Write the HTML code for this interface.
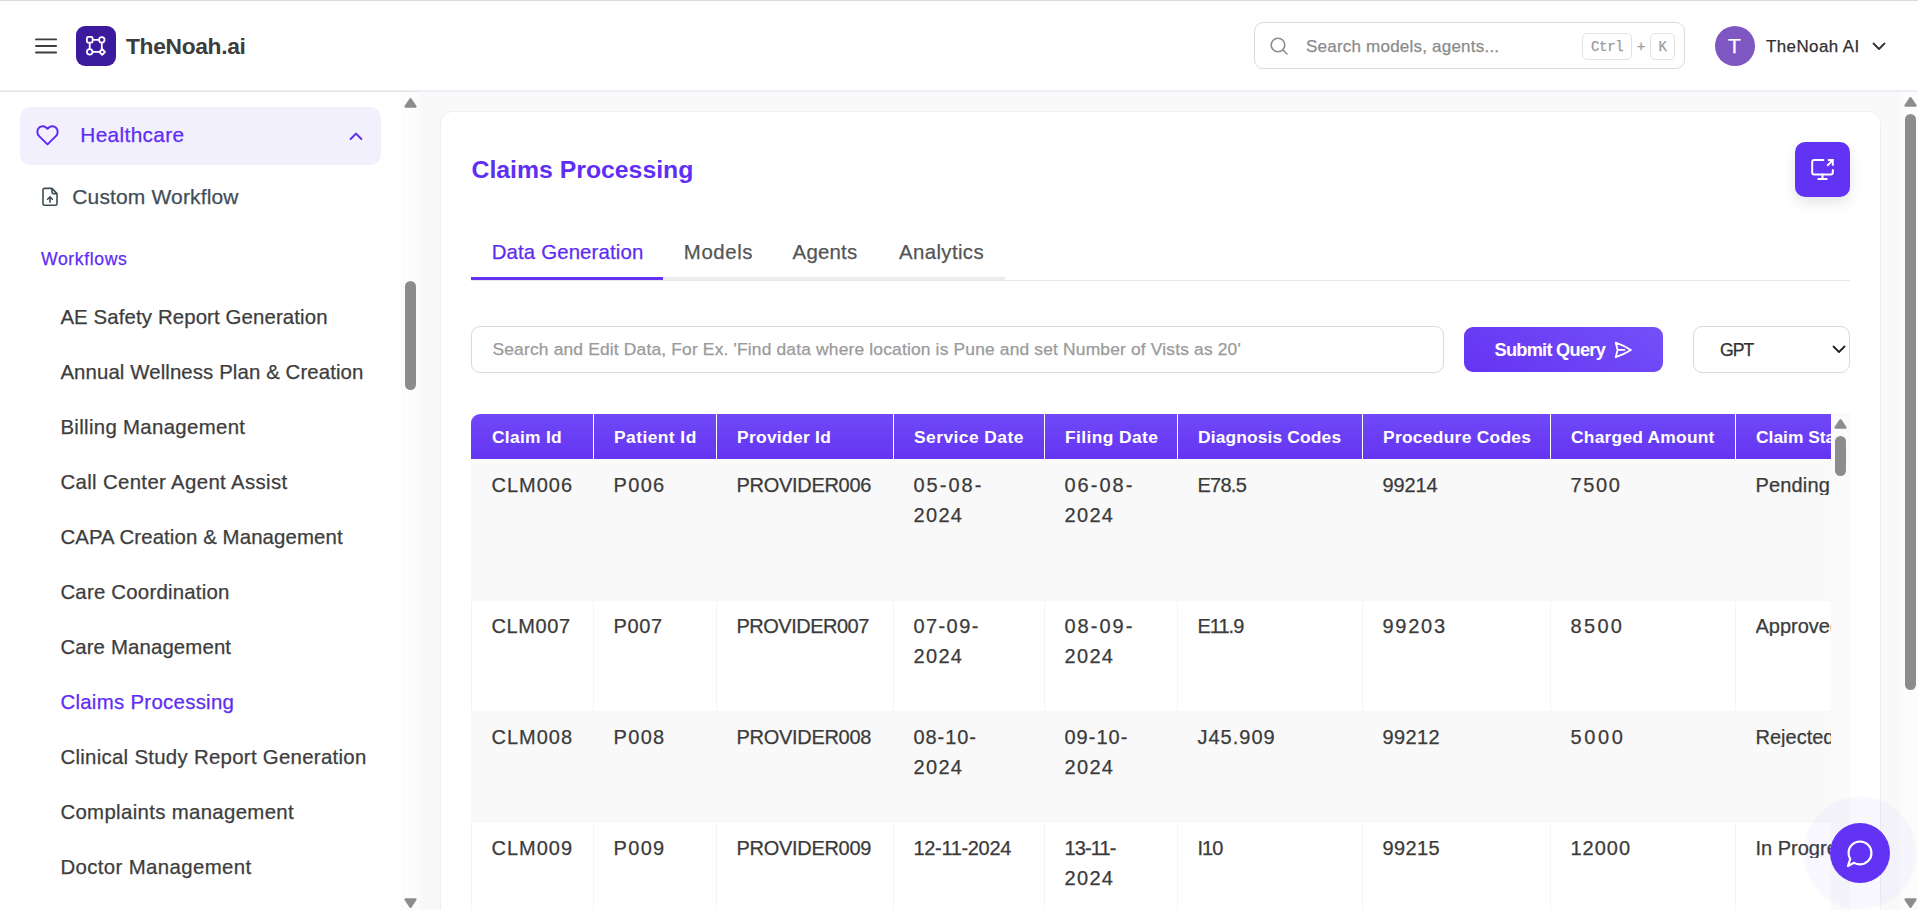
<!DOCTYPE html>
<html><head><meta charset="utf-8">
<style>
*{box-sizing:border-box;}
html,body{margin:0;padding:0;}
body{width:1918px;height:910px;overflow:hidden;position:relative;background:#f9f9f9;font-family:"Liberation Sans", sans-serif;}
.a{position:absolute;}
.t{position:absolute;white-space:nowrap;line-height:1;-webkit-text-stroke:0.25px currentColor;}
.t[style*="font-weight:bold"]{-webkit-text-stroke:0;}
</style></head><body>
<!-- header -->
<div class="a" style="left:0;top:0;width:1918px;height:92px;background:#fff;border-bottom:2px solid #efeef6;"></div>
<div class="a" style="left:0;top:90.5px;width:420px;height:1.3px;background:#e6e6ea;"></div>
<div class="a" style="left:0;top:0;width:1918px;height:1px;background:#dcdcdc;"></div>
<!-- hamburger -->
<svg class="a" style="left:30px;top:30px;" width="32" height="30" viewBox="0 0 32 30"><path d="M6 9.4 H26.1 M6 16 H26.1 M6 22.5 H26.1" stroke="#3d3d3d" stroke-width="1.9" stroke-linecap="round"/></svg>
<!-- logo box -->
<div class="a" style="left:76px;top:26px;width:40px;height:40px;border-radius:9px;background:#3b1a9e;"></div>
<svg class="a" style="left:76px;top:26px;" width="40" height="40" viewBox="0 0 40 40">
 <g fill="none" stroke="#fff" stroke-width="1.8">
  <rect x="10.9" y="10.9" width="5.7" height="5.7" rx="1.4"/>
  <circle cx="25.8" cy="13.8" r="2.75"/>
  <circle cx="13.7" cy="25.8" r="2.75"/>
  <path d="M26.2 23.2 L29 26 L26.2 28.8 L23.4 26 Z" stroke-linejoin="round"/>
  <path d="M16.6 13.8 H23 M25.8 16.6 V23.4 M13.7 16.6 V23 M16.5 25.9 H23.4"/>
 </g>
</svg>
<!-- search box -->
<div class="a" style="left:1254px;top:22px;width:431px;height:47px;border:1.3px solid #dcdcdc;border-radius:9px;background:#fff;"></div>
<svg class="a" style="left:1269px;top:36px;" width="20" height="20" viewBox="0 0 20 20"><circle cx="9" cy="9" r="6.8" fill="none" stroke="#8b8b8b" stroke-width="1.6"/><path d="M14 14 L18 18" stroke="#8b8b8b" stroke-width="1.6" stroke-linecap="round"/></svg>
<div class="a" style="left:1582px;top:32.5px;width:50px;height:27px;border:1.2px solid #e2e2e2;border-radius:5px;"></div>
<div class="a" style="left:1650px;top:32.5px;width:25px;height:27px;border:1.2px solid #e2e2e2;border-radius:5px;"></div>
<!-- avatar -->
<div class="a" style="left:1715px;top:26px;width:40px;height:40px;border-radius:50%;background:#7e57c2;"></div>
<svg class="a" style="left:1871px;top:40.6px;" width="16" height="12" viewBox="0 0 16 12"><path d="M2.5 2.5 L8 8 L13.5 2.5" fill="none" stroke="#333" stroke-width="1.8" stroke-linecap="round" stroke-linejoin="round"/></svg>

<!-- sidebar -->
<div class="a" style="left:0;top:92px;width:420px;height:818px;background:#fff;"></div>
<div class="a" style="left:401px;top:92px;width:19px;height:818px;background:#fcfcfc;"></div>

<div class="a" style="left:20px;top:107px;width:361px;height:58px;border-radius:10px;background:#f3f0fe;"></div>
<svg class="a" style="left:34px;top:122px;" width="27" height="26" viewBox="0 0 27 26"><g transform="translate(13.5 13) scale(0.91) translate(-13.5 -13)"><path d="M13.5 23.3 L4.3 14.2 C1.6 11.5 1.7 7.2 4.4 4.8 C7 2.5 10.9 2.9 13.5 6.2 C16.1 2.9 20 2.5 22.6 4.8 C25.3 7.2 25.4 11.5 22.7 14.2 Z" fill="none" stroke="#5e2df2" stroke-width="2.2" stroke-linejoin="round"/></g></svg>
<svg class="a" style="left:346px;top:128px;" width="20" height="16" viewBox="0 0 20 16"><path d="M4.6 11 L10 5.6 L15.4 11" fill="none" stroke="#5e2df2" stroke-width="2" stroke-linecap="round" stroke-linejoin="round"/></svg>
<svg class="a" style="left:40px;top:186px;" width="20" height="22" viewBox="0 0 20 22"><path d="M3 3.9 C3 3 3.6 2.4 4.5 2.4 H12 L17 7.6 V17.8 C17 18.7 16.4 19.3 15.5 19.3 H4.5 C3.6 19.3 3 18.7 3 17.8 Z M12 2.4 V6.2 C12 7 12.6 7.6 13.4 7.6 H17" fill="none" stroke="#3f4e57" stroke-width="1.6" stroke-linejoin="round"/><path d="M10 16.3 V10.8 M7.6 13.2 L10 10.8 L12.4 13.2" fill="none" stroke="#3f4e57" stroke-width="1.6" stroke-linecap="round" stroke-linejoin="round"/></svg>
<!-- sidebar scrollbar -->
<div class="a" style="left:405px;top:281px;width:11px;height:109px;border-radius:6px;background:#8c8c8c;"></div>

<!-- main page scrollbar -->
<div class="a" style="left:1900px;top:92px;width:18px;height:818px;background:#fcfcfc;"></div>
<div class="a" style="left:1905px;top:114px;width:11px;height:576px;border-radius:6px;background:#8c8c8c;"></div>

<!-- card -->
<div class="a" style="left:440px;top:111px;width:1441px;height:820px;background:#fff;border:1px solid #efefef;border-radius:12px;"></div>
<!-- monitor button -->
<div class="a" style="left:1795px;top:142px;width:55px;height:55px;border-radius:10px;background:#6232f5;box-shadow:0 6px 14px rgba(0,0,0,0.10);"></div>
<svg class="a" style="left:1809px;top:156px;" width="27" height="27" viewBox="0 0 27 27"><path d="M14.4 4.1 H5.2 C4.1 4.1 3.2 5 3.2 6.1 V16.5 C3.2 17.6 4.1 18.5 5.2 18.5 H21.8 C22.9 18.5 23.8 17.6 23.8 16.5 V13.9" fill="none" stroke="#fff" stroke-width="2" stroke-linecap="round"/><path d="M13.5 18.5 V22.9 M9.3 22.9 H17.7" stroke="#fff" stroke-width="2" stroke-linecap="round"/><path d="M18.9 4.1 H23.8 V9.8 M23.8 4.1 L18.2 9.7" fill="none" stroke="#fff" stroke-width="2" stroke-linejoin="miter"/></svg>
<!-- tabs underline -->
<div class="a" style="left:471px;top:280px;width:1379px;height:1px;background:#e9e9e9;"></div>
<div class="a" style="left:663px;top:277px;width:342px;height:3px;background:#ececec;"></div>
<div class="a" style="left:471px;top:277px;width:192px;height:3px;background:#6232f5;"></div>
<!-- query input -->
<div class="a" style="left:471px;top:326px;width:973px;height:47px;border:1.3px solid #dadada;border-radius:9px;background:#fff;"></div>
<div class="a" style="left:1464px;top:327px;width:199px;height:45px;border-radius:9px;background:linear-gradient(30deg,#6534f3,#7450f8);"></div>
<svg class="a" style="left:1612px;top:339px;" width="22" height="22" viewBox="0 0 22 22"><path d="M3.7 3.6 Q11.5 6.3 18.9 10.9 Q11.5 15.5 3.7 18.2 L5.6 10.9 Z M5.6 10.9 H12.4" fill="none" stroke="#fff" stroke-width="1.8" stroke-linejoin="round" stroke-linecap="round"/></svg>
<div class="a" style="left:1693px;top:326px;width:157px;height:47px;border:1.3px solid #dadada;border-radius:9px;background:#fff;"></div>
<svg class="a" style="left:1830px;top:343px;" width="18" height="14" viewBox="0 0 18 14"><path d="M3.5 3.5 L9 9 L14.5 3.5" fill="none" stroke="#222" stroke-width="1.8" stroke-linecap="round" stroke-linejoin="round"/></svg>

<!-- table -->
<div class="a" style="left:1831px;top:413px;width:19px;height:497px;background:#fafafa;"></div>
<!-- body col lines -->
<div class="a" style="left:471px;top:459px;width:1px;height:451px;background:#f5f5f5;"></div>
<div class="a" style="left:593px;top:459px;width:1px;height:451px;background:#f5f5f5;"></div>
<div class="a" style="left:716px;top:459px;width:1px;height:451px;background:#f5f5f5;"></div>
<div class="a" style="left:893px;top:459px;width:1px;height:451px;background:#f5f5f5;"></div>
<div class="a" style="left:1044px;top:459px;width:1px;height:451px;background:#f5f5f5;"></div>
<div class="a" style="left:1177px;top:459px;width:1px;height:451px;background:#f5f5f5;"></div>
<div class="a" style="left:1362px;top:459px;width:1px;height:451px;background:#f5f5f5;"></div>
<div class="a" style="left:1550px;top:459px;width:1px;height:451px;background:#f5f5f5;"></div>
<div class="a" style="left:1735px;top:459px;width:1px;height:451px;background:#f5f5f5;"></div>
<div class="a" style="left:471px;top:459px;width:1360px;height:142px;background:#f9f9f9;"></div>
<div class="a" style="left:471px;top:711px;width:1360px;height:112px;background:#f9f9f9;"></div>
<div class="a" style="left:471px;top:414px;width:1360px;height:45px;border-radius:9px 0 0 0;background:linear-gradient(180deg,#7048f8,#6535f2);"></div>
<div class="a" style="left:593px;top:414px;width:1px;height:45px;background:#ffffff;"></div>
<div class="a" style="left:716px;top:414px;width:1px;height:45px;background:#ffffff;"></div>
<div class="a" style="left:893px;top:414px;width:1px;height:45px;background:#ffffff;"></div>
<div class="a" style="left:1044px;top:414px;width:1px;height:45px;background:#ffffff;"></div>
<div class="a" style="left:1177px;top:414px;width:1px;height:45px;background:#ffffff;"></div>
<div class="a" style="left:1362px;top:414px;width:1px;height:45px;background:#ffffff;"></div>
<div class="a" style="left:1550px;top:414px;width:1px;height:45px;background:#ffffff;"></div>
<div class="a" style="left:1735px;top:414px;width:1px;height:45px;background:#ffffff;"></div>
<div class="a" style="left:1835px;top:436px;width:11px;height:40px;border-radius:6px;background:#8c8c8c;"></div>

<svg class="a" style="left:403px;top:97.2px;" width="15" height="11" viewBox="0 0 15 11"><path d="M7.5 2.1 L12.5 9.6 H2.5 Z" fill="#8c8c8c" stroke="#8c8c8c" stroke-width="2.3" stroke-linejoin="round"/></svg>
<svg class="a" style="left:403px;top:897.6px;" width="15" height="11" viewBox="0 0 15 11"><path d="M2.5 1.4 H12.5 L7.5 8.9 Z" fill="#8c8c8c" stroke="#8c8c8c" stroke-width="2.3" stroke-linejoin="round"/></svg>
<svg class="a" style="left:1903px;top:96.3px;" width="15" height="11" viewBox="0 0 15 11"><path d="M7.5 2.1 L12.5 9.6 H2.5 Z" fill="#8c8c8c" stroke="#8c8c8c" stroke-width="2.3" stroke-linejoin="round"/></svg>
<svg class="a" style="left:1903.2px;top:898.2px;" width="15" height="11" viewBox="0 0 15 11"><path d="M2.5 1.4 H12.5 L7.5 8.9 Z" fill="#8c8c8c" stroke="#8c8c8c" stroke-width="2.3" stroke-linejoin="round"/></svg>
<svg class="a" style="left:1833px;top:418px;" width="15" height="11" viewBox="0 0 15 11"><path d="M7.5 2.1 L12.5 9.6 H2.5 Z" fill="#8c8c8c" stroke="#8c8c8c" stroke-width="2.3" stroke-linejoin="round"/></svg>
<div class="t" id="logo" style="left:126.00px;top:34.82px;font-size:22.80px;font-weight:bold;color:#3d3d3d;letter-spacing:-0.333px;font-family:'Liberation Sans', sans-serif;">TheNoah.ai</div>
<div class="t" id="srch" style="left:1306.00px;top:37.78px;font-size:17.00px;font-weight:normal;color:#8b8b8b;letter-spacing:0.218px;font-family:'Liberation Sans', sans-serif;">Search models, agents...</div>
<div class="t" id="user" style="left:1766.00px;top:38.99px;font-size:16.90px;font-weight:normal;color:#303030;letter-spacing:0.444px;font-family:'Liberation Sans', sans-serif;">TheNoah AI</div>
<div class="t" id="ctrl" style="left:1591.00px;top:40.37px;font-size:14.00px;font-weight:normal;color:#9a9a9a;letter-spacing:-0.333px;font-family:'Liberation Mono', monospace;">Ctrl</div>
<div class="t" id="plus" style="left:1637.00px;top:39.17px;font-size:14.00px;font-weight:normal;color:#9a9a9a;letter-spacing:0.000px;font-family:'Liberation Sans', sans-serif;">+</div>
<div class="t" id="kk" style="left:1658.50px;top:40.37px;font-size:14.00px;font-weight:normal;color:#9a9a9a;letter-spacing:5.000px;font-family:'Liberation Mono', monospace;">K</div>
<div class="t" id="avT" style="left:1728.00px;top:34.76px;font-size:21.00px;font-weight:normal;color:#ffffff;letter-spacing:0.000px;font-family:'Liberation Sans', sans-serif;">T</div>
<div class="t" id="hc" style="left:80.30px;top:124.79px;font-size:20.80px;font-weight:normal;color:#5e2df2;letter-spacing:0.360px;font-family:'Liberation Sans', sans-serif;">Healthcare</div>
<div class="t" id="cw" style="left:72.30px;top:186.46px;font-size:21.00px;font-weight:normal;color:#3f4e57;letter-spacing:0.143px;font-family:'Liberation Sans', sans-serif;">Custom Workflow</div>
<div class="t" id="wf" style="left:41.00px;top:250.60px;font-size:17.60px;font-weight:normal;color:#5e2df2;letter-spacing:0.625px;font-family:'Liberation Sans', sans-serif;">Workflows</div>
<div class="t" id="side0" style="left:60.40px;top:307.24px;font-size:20.40px;font-weight:normal;color:#3d3d3d;letter-spacing:0.115px;font-family:'Liberation Sans', sans-serif;">AE Safety Report Generation</div>
<div class="t" id="side1" style="left:60.40px;top:362.24px;font-size:20.40px;font-weight:normal;color:#3d3d3d;letter-spacing:0.100px;font-family:'Liberation Sans', sans-serif;">Annual Wellness Plan &amp; Creation</div>
<div class="t" id="side2" style="left:60.40px;top:417.24px;font-size:20.40px;font-weight:normal;color:#3d3d3d;letter-spacing:0.324px;font-family:'Liberation Sans', sans-serif;">Billing Management</div>
<div class="t" id="side3" style="left:60.40px;top:472.24px;font-size:20.40px;font-weight:normal;color:#3d3d3d;letter-spacing:0.348px;font-family:'Liberation Sans', sans-serif;">Call Center Agent Assist</div>
<div class="t" id="side4" style="left:60.40px;top:527.24px;font-size:20.40px;font-weight:normal;color:#3d3d3d;letter-spacing:0.104px;font-family:'Liberation Sans', sans-serif;">CAPA Creation &amp; Management</div>
<div class="t" id="side5" style="left:60.40px;top:582.24px;font-size:20.40px;font-weight:normal;color:#3d3d3d;letter-spacing:0.219px;font-family:'Liberation Sans', sans-serif;">Care Coordination</div>
<div class="t" id="side6" style="left:60.40px;top:637.24px;font-size:20.40px;font-weight:normal;color:#3d3d3d;letter-spacing:0.125px;font-family:'Liberation Sans', sans-serif;">Care Management</div>
<div class="t" id="side7" style="left:60.40px;top:692.24px;font-size:20.40px;font-weight:normal;color:#5e2df2;letter-spacing:0.293px;font-family:'Liberation Sans', sans-serif;">Claims Processing</div>
<div class="t" id="side8" style="left:60.40px;top:747.24px;font-size:20.40px;font-weight:normal;color:#3d3d3d;letter-spacing:0.290px;font-family:'Liberation Sans', sans-serif;">Clinical Study Report Generation</div>
<div class="t" id="side9" style="left:60.40px;top:802.24px;font-size:20.40px;font-weight:normal;color:#3d3d3d;letter-spacing:0.330px;font-family:'Liberation Sans', sans-serif;">Complaints management</div>
<div class="t" id="side10" style="left:60.40px;top:857.24px;font-size:20.40px;font-weight:normal;color:#3d3d3d;letter-spacing:0.375px;font-family:'Liberation Sans', sans-serif;">Doctor Management</div>
<div class="t" id="side11" style="left:60.40px;top:912.24px;font-size:20.40px;font-weight:normal;color:#3d3d3d;letter-spacing:0.000px;font-family:'Liberation Sans', sans-serif;">Drug Safety Monitoring</div>
<div class="t" id="title" style="left:471.50px;top:157.96px;font-size:24.80px;font-weight:bold;color:#5e2ef5;letter-spacing:0.000px;font-family:'Liberation Sans', sans-serif;">Claims Processing</div>
<div class="t" id="tab0" style="left:491.70px;top:242.04px;font-size:20.40px;font-weight:normal;color:#5e2df2;letter-spacing:0.143px;font-family:'Liberation Sans', sans-serif;">Data Generation</div>
<div class="t" id="tab1" style="left:683.80px;top:242.04px;font-size:20.40px;font-weight:normal;color:#555555;letter-spacing:0.600px;font-family:'Liberation Sans', sans-serif;">Models</div>
<div class="t" id="tab2" style="left:792.60px;top:242.04px;font-size:20.40px;font-weight:normal;color:#555555;letter-spacing:0.200px;font-family:'Liberation Sans', sans-serif;">Agents</div>
<div class="t" id="tab3" style="left:899.00px;top:242.04px;font-size:20.40px;font-weight:normal;color:#555555;letter-spacing:0.375px;font-family:'Liberation Sans', sans-serif;">Analytics</div>
<div class="t" id="ph" style="left:492.50px;top:341.33px;font-size:17.40px;font-weight:normal;color:#9a9a9a;letter-spacing:0.172px;font-family:'Liberation Sans', sans-serif;">Search and Edit Data, For Ex. 'Find data where location is Pune and set Number of Vists as 20'</div>
<div class="t" id="sub" style="left:1494.50px;top:341.22px;font-size:18.20px;font-weight:bold;color:#ffffff;letter-spacing:-0.727px;font-family:'Liberation Sans', sans-serif;">Submit Query</div>
<div class="t" id="gpt" style="left:1720.00px;top:341.80px;font-size:17.60px;font-weight:normal;color:#303030;letter-spacing:-1.000px;font-family:'Liberation Sans', sans-serif;">GPT</div>
<div class="t" id="h0" style="left:492.00px;top:429.13px;font-size:17.40px;font-weight:bold;color:#ffffff;letter-spacing:0.286px;font-family:'Liberation Sans', sans-serif;">Claim Id</div>
<div class="t" id="h1" style="left:614.00px;top:429.13px;font-size:17.40px;font-weight:bold;color:#ffffff;letter-spacing:0.444px;font-family:'Liberation Sans', sans-serif;">Patient Id</div>
<div class="t" id="h2" style="left:737.00px;top:429.13px;font-size:17.40px;font-weight:bold;color:#ffffff;letter-spacing:0.300px;font-family:'Liberation Sans', sans-serif;">Provider Id</div>
<div class="t" id="h3" style="left:914.00px;top:429.13px;font-size:17.40px;font-weight:bold;color:#ffffff;letter-spacing:0.455px;font-family:'Liberation Sans', sans-serif;">Service Date</div>
<div class="t" id="h4" style="left:1065.00px;top:429.13px;font-size:17.40px;font-weight:bold;color:#ffffff;letter-spacing:0.400px;font-family:'Liberation Sans', sans-serif;">Filing Date</div>
<div class="t" id="h5" style="left:1198.00px;top:429.13px;font-size:17.40px;font-weight:bold;color:#ffffff;letter-spacing:0.143px;font-family:'Liberation Sans', sans-serif;">Diagnosis Codes</div>
<div class="t" id="h6" style="left:1383.00px;top:429.13px;font-size:17.40px;font-weight:bold;color:#ffffff;letter-spacing:0.286px;font-family:'Liberation Sans', sans-serif;">Procedure Codes</div>
<div class="t" id="h7" style="left:1571.00px;top:429.13px;font-size:17.40px;font-weight:bold;color:#ffffff;letter-spacing:0.231px;font-family:'Liberation Sans', sans-serif;">Charged Amount</div>
<div class="t" id="h8" style="left:1756.00px;top:429.13px;font-size:17.40px;font-weight:bold;color:#ffffff;letter-spacing:0.000px;font-family:'Liberation Sans', sans-serif;width:75.0px;overflow:hidden;">Claim Status</div>
<div class="t" id="r0c0l0" style="left:491.50px;top:475.19px;font-size:20.00px;font-weight:normal;color:#3b3b3b;letter-spacing:1.000px;font-family:'Liberation Sans', sans-serif;">CLM006</div>
<div class="t" id="r0c1l0" style="left:613.50px;top:475.19px;font-size:20.00px;font-weight:normal;color:#3b3b3b;letter-spacing:1.334px;font-family:'Liberation Sans', sans-serif;">P006</div>
<div class="t" id="r0c2l0" style="left:736.50px;top:475.19px;font-size:20.00px;font-weight:normal;color:#3b3b3b;letter-spacing:-0.300px;font-family:'Liberation Sans', sans-serif;">PROVIDER006</div>
<div class="t" id="r0c3l0" style="left:913.50px;top:475.19px;font-size:20.00px;font-weight:normal;color:#3b3b3b;letter-spacing:2.000px;font-family:'Liberation Sans', sans-serif;">05-08-</div>
<div class="t" id="r0c3l1" style="left:913.50px;top:505.19px;font-size:20.00px;font-weight:normal;color:#3b3b3b;letter-spacing:1.333px;font-family:'Liberation Sans', sans-serif;">2024</div>
<div class="t" id="r0c4l0" style="left:1064.50px;top:475.19px;font-size:20.00px;font-weight:normal;color:#3b3b3b;letter-spacing:2.000px;font-family:'Liberation Sans', sans-serif;">06-08-</div>
<div class="t" id="r0c4l1" style="left:1064.50px;top:505.19px;font-size:20.00px;font-weight:normal;color:#3b3b3b;letter-spacing:1.333px;font-family:'Liberation Sans', sans-serif;">2024</div>
<div class="t" id="r0c5l0" style="left:1197.50px;top:475.19px;font-size:20.00px;font-weight:normal;color:#3b3b3b;letter-spacing:-0.750px;font-family:'Liberation Sans', sans-serif;">E78.5</div>
<div class="t" id="r0c6l0" style="left:1382.50px;top:475.19px;font-size:20.00px;font-weight:normal;color:#3b3b3b;letter-spacing:-0.100px;font-family:'Liberation Sans', sans-serif;">99214</div>
<div class="t" id="r0c7l0" style="left:1570.50px;top:475.19px;font-size:20.00px;font-weight:normal;color:#3b3b3b;letter-spacing:1.667px;font-family:'Liberation Sans', sans-serif;">7500</div>
<div class="t" id="r0c8l0" style="left:1755.50px;top:475.19px;font-size:20.00px;font-weight:normal;color:#3b3b3b;letter-spacing:0.166px;font-family:'Liberation Sans', sans-serif;width:75.5px;overflow:hidden;">Pending</div>
<div class="t" id="r1c0l0" style="left:491.50px;top:616.19px;font-size:20.00px;font-weight:normal;color:#3b3b3b;letter-spacing:0.600px;font-family:'Liberation Sans', sans-serif;">CLM007</div>
<div class="t" id="r1c1l0" style="left:613.50px;top:616.19px;font-size:20.00px;font-weight:normal;color:#3b3b3b;letter-spacing:0.667px;font-family:'Liberation Sans', sans-serif;">P007</div>
<div class="t" id="r1c2l0" style="left:736.50px;top:616.19px;font-size:20.00px;font-weight:normal;color:#3b3b3b;letter-spacing:-0.500px;font-family:'Liberation Sans', sans-serif;">PROVIDER007</div>
<div class="t" id="r1c3l0" style="left:913.50px;top:616.19px;font-size:20.00px;font-weight:normal;color:#3b3b3b;letter-spacing:1.400px;font-family:'Liberation Sans', sans-serif;">07-09-</div>
<div class="t" id="r1c3l1" style="left:913.50px;top:646.19px;font-size:20.00px;font-weight:normal;color:#3b3b3b;letter-spacing:1.333px;font-family:'Liberation Sans', sans-serif;">2024</div>
<div class="t" id="r1c4l0" style="left:1064.50px;top:616.19px;font-size:20.00px;font-weight:normal;color:#3b3b3b;letter-spacing:2.000px;font-family:'Liberation Sans', sans-serif;">08-09-</div>
<div class="t" id="r1c4l1" style="left:1064.50px;top:646.19px;font-size:20.00px;font-weight:normal;color:#3b3b3b;letter-spacing:1.333px;font-family:'Liberation Sans', sans-serif;">2024</div>
<div class="t" id="r1c5l0" style="left:1197.50px;top:616.19px;font-size:20.00px;font-weight:normal;color:#3b3b3b;letter-spacing:-1.000px;font-family:'Liberation Sans', sans-serif;">E11.9</div>
<div class="t" id="r1c6l0" style="left:1382.50px;top:616.19px;font-size:20.00px;font-weight:normal;color:#3b3b3b;letter-spacing:1.750px;font-family:'Liberation Sans', sans-serif;">99203</div>
<div class="t" id="r1c7l0" style="left:1570.50px;top:616.19px;font-size:20.00px;font-weight:normal;color:#3b3b3b;letter-spacing:2.333px;font-family:'Liberation Sans', sans-serif;">8500</div>
<div class="t" id="r1c8l0" style="left:1755.50px;top:616.19px;font-size:20.00px;font-weight:normal;color:#3b3b3b;letter-spacing:0.000px;font-family:'Liberation Sans', sans-serif;width:75.5px;overflow:hidden;">Approved</div>
<div class="t" id="r2c0l0" style="left:491.50px;top:727.29px;font-size:20.00px;font-weight:normal;color:#3b3b3b;letter-spacing:1.000px;font-family:'Liberation Sans', sans-serif;">CLM008</div>
<div class="t" id="r2c1l0" style="left:613.50px;top:727.29px;font-size:20.00px;font-weight:normal;color:#3b3b3b;letter-spacing:1.334px;font-family:'Liberation Sans', sans-serif;">P008</div>
<div class="t" id="r2c2l0" style="left:736.50px;top:727.29px;font-size:20.00px;font-weight:normal;color:#3b3b3b;letter-spacing:-0.300px;font-family:'Liberation Sans', sans-serif;">PROVIDER008</div>
<div class="t" id="r2c3l0" style="left:913.50px;top:727.29px;font-size:20.00px;font-weight:normal;color:#3b3b3b;letter-spacing:0.920px;font-family:'Liberation Sans', sans-serif;">08-10-</div>
<div class="t" id="r2c3l1" style="left:913.50px;top:757.29px;font-size:20.00px;font-weight:normal;color:#3b3b3b;letter-spacing:1.333px;font-family:'Liberation Sans', sans-serif;">2024</div>
<div class="t" id="r2c4l0" style="left:1064.50px;top:727.29px;font-size:20.00px;font-weight:normal;color:#3b3b3b;letter-spacing:1.000px;font-family:'Liberation Sans', sans-serif;">09-10-</div>
<div class="t" id="r2c4l1" style="left:1064.50px;top:757.29px;font-size:20.00px;font-weight:normal;color:#3b3b3b;letter-spacing:1.333px;font-family:'Liberation Sans', sans-serif;">2024</div>
<div class="t" id="r2c5l0" style="left:1197.50px;top:727.29px;font-size:20.00px;font-weight:normal;color:#3b3b3b;letter-spacing:1.000px;font-family:'Liberation Sans', sans-serif;">J45.909</div>
<div class="t" id="r2c6l0" style="left:1382.50px;top:727.29px;font-size:20.00px;font-weight:normal;color:#3b3b3b;letter-spacing:0.375px;font-family:'Liberation Sans', sans-serif;">99212</div>
<div class="t" id="r2c7l0" style="left:1570.50px;top:727.29px;font-size:20.00px;font-weight:normal;color:#3b3b3b;letter-spacing:2.667px;font-family:'Liberation Sans', sans-serif;">5000</div>
<div class="t" id="r2c8l0" style="left:1755.50px;top:727.29px;font-size:20.00px;font-weight:normal;color:#3b3b3b;letter-spacing:0.000px;font-family:'Liberation Sans', sans-serif;width:75.5px;overflow:hidden;">Rejected</div>
<div class="t" id="r3c0l0" style="left:491.50px;top:838.09px;font-size:20.00px;font-weight:normal;color:#3b3b3b;letter-spacing:1.000px;font-family:'Liberation Sans', sans-serif;">CLM009</div>
<div class="t" id="r3c1l0" style="left:613.50px;top:838.09px;font-size:20.00px;font-weight:normal;color:#3b3b3b;letter-spacing:1.334px;font-family:'Liberation Sans', sans-serif;">P009</div>
<div class="t" id="r3c2l0" style="left:736.50px;top:838.09px;font-size:20.00px;font-weight:normal;color:#3b3b3b;letter-spacing:-0.300px;font-family:'Liberation Sans', sans-serif;">PROVIDER009</div>
<div class="t" id="r3c3l0" style="left:913.50px;top:838.09px;font-size:20.00px;font-weight:normal;color:#3b3b3b;letter-spacing:-0.333px;font-family:'Liberation Sans', sans-serif;">12-11-2024</div>
<div class="t" id="r3c4l0" style="left:1064.50px;top:838.09px;font-size:20.00px;font-weight:normal;color:#3b3b3b;letter-spacing:-0.900px;font-family:'Liberation Sans', sans-serif;">13-11-</div>
<div class="t" id="r3c4l1" style="left:1064.50px;top:868.09px;font-size:20.00px;font-weight:normal;color:#3b3b3b;letter-spacing:1.333px;font-family:'Liberation Sans', sans-serif;">2024</div>
<div class="t" id="r3c5l0" style="left:1197.50px;top:838.09px;font-size:20.00px;font-weight:normal;color:#3b3b3b;letter-spacing:-1.000px;font-family:'Liberation Sans', sans-serif;">I10</div>
<div class="t" id="r3c6l0" style="left:1382.50px;top:838.09px;font-size:20.00px;font-weight:normal;color:#3b3b3b;letter-spacing:0.375px;font-family:'Liberation Sans', sans-serif;">99215</div>
<div class="t" id="r3c7l0" style="left:1570.50px;top:838.09px;font-size:20.00px;font-weight:normal;color:#3b3b3b;letter-spacing:1.000px;font-family:'Liberation Sans', sans-serif;">12000</div>
<div class="t" id="r3c8l0" style="left:1755.50px;top:838.09px;font-size:20.00px;font-weight:normal;color:#3b3b3b;letter-spacing:0.000px;font-family:'Liberation Sans', sans-serif;width:75.5px;overflow:hidden;">In Progress</div>

<!-- chat -->
<div class="a" style="left:1802px;top:795px;width:116px;height:116px;border-radius:50%;background:radial-gradient(circle closest-side,rgba(98,50,245,0.04) 0,rgba(98,50,245,0.04) 94%,rgba(98,50,245,0) 100%);"></div>
<div class="a" style="left:1830px;top:823px;width:60px;height:60px;border-radius:50%;background:#6232f5;"></div>
<svg class="a" style="left:1845px;top:839px;" width="30" height="30" viewBox="0 0 30 30"><g transform="translate(15 15) scale(1.09) translate(-15 -15)"><path d="M4 26 L6 19.5 C5 17.8 4.5 16 4.5 14 C4.5 8.2 9.2 3.5 15 3.5 C20.8 3.5 25.5 8.2 25.5 14 C25.5 19.8 20.8 24.5 15 24.5 C13 24.5 11.2 24 9.6 23.1 Z" fill="none" stroke="#fff" stroke-width="2" stroke-linejoin="round"/></g></svg>
</body></html>
